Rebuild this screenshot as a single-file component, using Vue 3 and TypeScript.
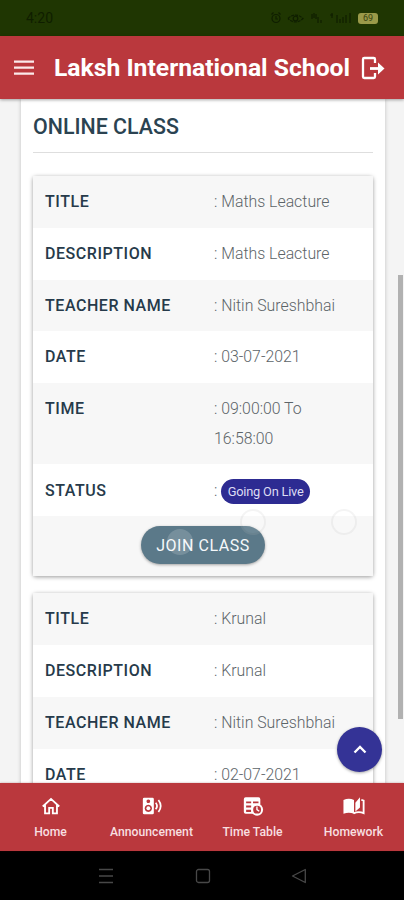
<script setup lang="ts">
interface Row {
  label: string
  value: string
}

interface OnlineClass {
  rows: Row[]
  status?: string
}

const classes: OnlineClass[] = [
  {
    rows: [
      { label: 'TITLE', value: 'Maths Leacture' },
      { label: 'DESCRIPTION', value: 'Maths Leacture' },
      { label: 'TEACHER NAME', value: 'Nitin Sureshbhai' },
      { label: 'DATE', value: '03-07-2021' },
      { label: 'TIME', value: '09:00:00 To 16:58:00' },
    ],
    status: 'Going On Live',
  },
  {
    rows: [
      { label: 'TITLE', value: 'Krunal' },
      { label: 'DESCRIPTION', value: 'Krunal' },
      { label: 'TEACHER NAME', value: 'Nitin Sureshbhai' },
      { label: 'DATE', value: '02-07-2021' },
    ],
  },
]
</script>

<template>
  <div class="screen">
    <div class="status-bar">
      <span class="clock">4:20</span>
      <svg class="indicators" width="84" height="14" viewBox="0 0 84 14" fill="none" stroke="#0f1e00" stroke-width="1.2">
        <circle cx="6" cy="7.5" r="4" />
        <path d="M6 5v3h2M1.5 3.5l2-2M10.5 3.5l-2-2" />
        <path d="M18 7.500q7.500-7 15 0q-7.500 7-15 0" stroke-dasharray="3 1" />
        <circle cx="25.500" cy="7.500" r="2.300" />
        <path d="M42 3v5M44 2v5M46 3v5M48 6v6M51 9v3M60 4h3M62 2v5M67 4v8M70 8v4M73 6v6M76 4v8M80 2v10" />
      </svg>
      <span class="battery">69</span>
    </div>

    <header class="app-bar">
      <svg class="menu-icon" width="20" height="16" viewBox="0 0 20 16" fill="none" stroke="#fbe9ea" stroke-width="2.2">
        <path d="M0 1.700h20M0 7.700h20M0 13.700h20" />
      </svg>
      <h1>Laksh International School</h1>
      <svg class="logout-icon" width="24" height="24" viewBox="0 0 24 24" fill="none" stroke="#fff" stroke-width="2.3">
        <path d="M14 7V3.300Q14 2 12.700 2H3.300Q2 2 2 3.300V20.700Q2 22 3.300 22H12.700Q14 22 14 20.700V17" />
        <path d="M9 12.500h9" stroke-width="2.800" />
        <path d="M17 6.500l6.500 6-6.500 6z" fill="#fff" stroke="none" />
      </svg>
    </header>

    <main class="content">
      <section class="panel">
        <h2>ONLINE CLASS</h2>
        <article v-for="(item, i) in classes" :key="i" class="card">
          <div v-for="row in item.rows" :key="row.label" class="row">
            <span class="label">{{ row.label }}</span>
            <span class="value">: {{ row.value }}</span>
          </div>
          <template v-if="item.status">
            <div class="row">
              <span class="label">STATUS</span>
              <span class="value status">: <span class="badge">{{ item.status }}</span></span>
            </div>
            <div class="row action">
              <button type="button" class="join">JOIN CLASS</button>
              <i class="dot dot-left"></i>
              <i class="dot dot-mid"></i>
              <i class="dot dot-right"></i>
            </div>
          </template>
        </article>
      </section>
      <div class="scroll-thumb"></div>
      <button type="button" class="to-top" aria-label="Back to top">
        <svg width="14" height="9" viewBox="0 0 14 9" fill="none" stroke="#fff" stroke-width="2.300">
          <path d="M1.500 7.500L7 2l5.500 5.500" />
        </svg>
      </button>
    </main>

    <nav class="tabs">
      <a class="tab">
        <svg width="24" height="24" viewBox="0 0 24 24" fill="none" stroke="#fff" stroke-width="2">
          <path d="M3 12.500L12 4.300l9 8.200M5.500 10.500V20H10v-6h4v6h4.500v-9.500" />
        </svg>
        <span>Home</span>
      </a>
      <a class="tab">
        <svg width="24" height="24" viewBox="0 0 24 24" fill="none">
          <path fill="#fff" fill-rule="evenodd" d="M3.500 3h9Q14 3 14 4.500v15Q14 21 12.500 21h-9Q2 21 2 19.500v-15Q2 3 3.500 3zM8 4.800a2 2 0 1 0 .01 0zM8 10.500a4 4 0 1 0 .01 0z" />
          <circle cx="8" cy="14.500" r="2.100" fill="#fff" />
          <path d="M16 8.500q3 3.500 0 7M19 5.500q5 6.500 0 13" stroke="#fff" stroke-width="1.900" />
        </svg>
        <span>Announcement</span>
      </a>
      <a class="tab">
        <svg width="24" height="24" viewBox="0 0 24 24">
          <path fill="#fff" fill-rule="evenodd" d="M4 2.500h14Q20 2.500 20 4.500v16H4Q2 20.500 2 18.500v-14Q2 2.500 4 2.500zM4.500 7v2H10V7zM12 7v2h6V7zM4.500 11.500v2H10v-2zM4.500 16v2.500H10V16z" />
          <circle cx="16.500" cy="16" r="6.500" fill="#fff" />
          <circle cx="16.500" cy="16" r="4.300" fill="#ba383d" />
          <path d="M16.300 12.500V16l2.500 1.800" fill="none" stroke="#fff" stroke-width="1.500" />
        </svg>
        <span>Time Table</span>
      </a>
      <a class="tab">
        <svg width="24" height="24" viewBox="0 0 24 24">
          <path fill="#fff" d="M.5 5.500Q6.500 2.500 12 5.500V20.500Q6.500 18 .5 20.500zM13.500 8.500L18.500 2.500v11L13.500 18z" />
          <path d="M20 5.200l2.500 1V19.700Q17 17.500 11.500 20" fill="none" stroke="#fff" stroke-width="2" />
        </svg>
        <span>Homework</span>
      </a>
    </nav>

    <div class="system-nav">
      <svg width="16" height="16" viewBox="0 0 16 16" fill="none" stroke="#484848" stroke-width="1.300">
        <path d="M1 1.500h14M1 8h14M1 14.500h14" />
      </svg>
      <svg width="16" height="16" viewBox="0 0 16 16" fill="none" stroke="#484848" stroke-width="1.300">
        <rect x="1.500" y="1.500" width="13" height="13" rx="2" />
      </svg>
      <svg width="16" height="16" viewBox="0 0 16 16" fill="none" stroke="#484848" stroke-width="1.300" stroke-linejoin="round">
        <path d="M1.500 8L14.300 1.500v13z" />
      </svg>
    </div>
  </div>
</template>

<style>
body {
  overflow: hidden;
}
</style>

<style scoped>
* {
  box-sizing: border-box;
}

.screen {
  display: flex;
  flex-direction: column;
  width: 404px;
  height: 900px;
  overflow: hidden;
  font-family: Roboto, 'Liberation Sans', sans-serif;
}

.status-bar {
  display: flex;
  flex: 0 0 36px;
  align-items: center;
  padding: 0 26px 0 26px;
  background: #1f3602;
}

.clock {
  flex: 1;
  color: #0f1e00;
  font-size: 14px;
}

.indicators {
  margin-right: 4px;
}

.battery {
  width: 20px;
  height: 11px;
  border-radius: 3px;
  background: #9a9a49;
  color: #38430e;
  font-size: 9px;
  line-height: 11px;
  text-align: center;
}

.app-bar {
  z-index: 2;
  display: flex;
  flex: 0 0 63px;
  align-items: center;
  padding: 0 19px 0 14px;
  background: #ba383d;
  box-shadow: 0 1px 3px rgba(0, 0, 0, 0.35);
}

.menu-icon {
  margin-right: 20px;
}

h1 {
  flex: 1;
  margin: 0;
  color: #fff;
  font-size: 24.700px;
  font-weight: 700;
  line-height: 30px;
  white-space: nowrap;
}

.content {
  position: relative;
  flex: 1;
  min-height: 0;
  overflow: hidden;
  padding: 0 19px 0 21px;
  background: #f4f4f4;
}

.panel {
  height: 720px;
  padding: 13px 12px;
  background: #fff;
  box-shadow: 0 0 4px rgba(0, 0, 0, 0.22);
}

h2 {
  height: 41px;
  margin: 0 0 23px;
  border-bottom: 1px solid #dedede;
  color: #2b4351;
  font-size: 21.400px;
  font-weight: 500;
  line-height: 30px;
}

.card {
  margin-bottom: 17px;
  border-radius: 3px;
  background: #fff;
  box-shadow: 0 1px 4px rgba(0, 0, 0, 0.4);
}

.row {
  display: grid;
  grid-template-columns: 169px 1fr;
  padding: 11.150px 12px;
  font-size: 16px;
  line-height: 29.500px;
}

.row:nth-child(odd) {
  background: #f7f7f7;
}

.label {
  color: #263a4a;
  font-weight: 500;
  letter-spacing: 0.550px;
}

.value {
  max-width: 130px;
  color: #5c6468;
  font-size: 15.850px;
  font-weight: 300;
}

.status {
  height: 29.500px;
  white-space: nowrap;
}

.badge {
  display: inline-block;
  height: 25px;
  padding: 0 6.500px;
  border-radius: 13px;
  background: #2d2b92;
  color: #dcdcf3;
  font-size: 12.800px;
  font-weight: 400;
  letter-spacing: -0.200px;
  line-height: 25px;
}

.action {
  position: relative;
  display: flex;
  justify-content: center;
  height: 60px;
  padding: 10px 0 0;
}

.join {
  width: 124px;
  height: 38px;
  padding: 0;
  border: 0;
  border-radius: 19px;
  background: #5b7989;
  box-shadow: 0 1px 3px rgba(0, 0, 0, 0.35);
  color: #f5f8fa;
  font: 400 16px Roboto, sans-serif;
  letter-spacing: 0.550px;
}

.dot {
  position: absolute;
  width: 26px;
  height: 26px;
  border: 2px solid rgba(0, 0, 0, 0.045);
  border-radius: 50%;
  background: rgba(255, 255, 255, 0.12);
}

.dot-left {
  top: 13px;
  left: 134px;
  border-color: transparent;
  background: rgba(255, 255, 255, 0.17);
}

.dot-mid {
  top: -7px;
  left: 207px;
}

.dot-right {
  top: -7px;
  left: 298px;
}

.scroll-thumb {
  position: absolute;
  top: 176px;
  right: 1px;
  width: 5px;
  height: 444px;
  background: #b1b1b1;
}

.to-top {
  position: absolute;
  top: 628px;
  right: 22px;
  display: flex;
  align-items: center;
  justify-content: center;
  width: 45px;
  height: 45px;
  padding: 0;
  border: 0;
  border-radius: 50%;
  background: #343396;
  box-shadow: 0 1px 3px rgba(0, 0, 0, 0.35);
}

.tabs {
  z-index: 1;
  display: grid;
  flex: 0 0 68px;
  grid-template-columns: repeat(4, 1fr);
  background: #ba383d;
  box-shadow: 0 0 2px rgba(100, 0, 0, 0.35);
}

.tab {
  display: flex;
  flex-direction: column;
  align-items: center;
  padding-top: 12px;
  color: #f8dfe0;
  font-size: 12.200px;
  font-weight: 500;
  line-height: 16px;
}

.tab svg {
  width: 22px;
  height: 22px;
  margin-bottom: 7px;
}

.tab span {
  white-space: nowrap;
}

.system-nav {
  display: flex;
  flex: 0 0 49px;
  align-items: center;
  justify-content: space-between;
  padding: 0 97px 0 98px;
  background: #000;
}
</style>
